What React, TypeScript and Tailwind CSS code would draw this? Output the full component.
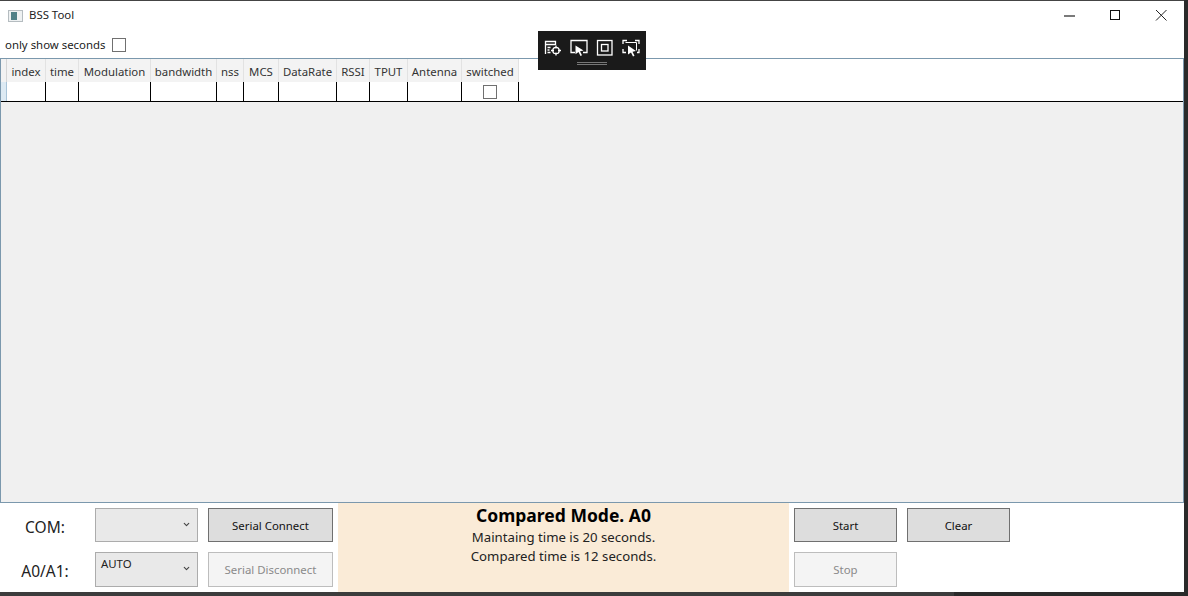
import { ChevronDown } from "lucide-react";

const font = { fontFamily: '"Noto Sans", "Open Sans", sans-serif' };

const columns = [
  { name: "index", width: "w-[39px]" },
  { name: "time", width: "w-[33px]" },
  { name: "Modulation", width: "w-[72px]" },
  { name: "bandwidth", width: "w-[66px]" },
  { name: "nss", width: "w-[27px]" },
  { name: "MCS", width: "w-[35px]" },
  { name: "DataRate", width: "w-[58px]" },
  { name: "RSSI", width: "w-[33px]" },
  { name: "TPUT", width: "w-[38px]" },
  { name: "Antenna", width: "w-[54px]" },
  { name: "switched", width: "w-[57px]" },
];

function Check() {
  return <span className="block w-[14px] h-[14px] border border-[#707070] bg-white" />;
}

function Combo({ text }: { text?: string }) {
  return (
    <div className="relative w-[103px] h-full border border-[#acacac] bg-[#e9e9e9] text-[11.4px] text-[#222] pl-[5px] pt-[3px] leading-[16px]">
      {text}
      <ChevronDown className="absolute right-[6px] top-[11px] w-[9px] h-[9px] text-[#444]" strokeWidth={3} />
    </div>
  );
}

function Btn({ label, off, w }: { label: string; off?: boolean; w: string }) {
  return (
    <button
      className={
        off
          ? `${w} h-full border border-[#bdbdbd] bg-[#f4f4f4] text-[#8a8a8a] text-[11.4px] pt-[1px]`
          : `${w} h-full border border-[#707070] bg-[#dddddd] text-[#111] text-[11.4px] pt-[1px]`
      }
    >
      {label}
    </button>
  );
}

function ToolbarIcons() {
  return (
    <div className="flex items-center gap-[8px] pl-[6px] pt-[8px]">
      <svg width="18" height="18" viewBox="0 0 18 18" fill="none" stroke="white" strokeWidth="1.3">
        <path d="M1.500 15V2.500h10V6" />
        <path d="M1.500 5.500h10M3.500 8.500h3M3.500 11h2M3.500 13.500h3" />
        <circle cx="12" cy="11.500" r="3.200" />
        <path d="M12 6.500v3M12 13.500v3M7 11.500h3M14 11.500h3" />
      </svg>
      <svg width="18" height="18" viewBox="0 0 18 18" fill="none" stroke="white" strokeWidth="1.3">
        <path d="M5 13.500H1V1.500h16v12h-4" />
        <path d="M5.500 6.500l8 5-3.500.8 2 4-1.500.7-2-4-3 2.200z" fill="white" stroke="none" />
      </svg>
      <svg width="18" height="18" viewBox="0 0 18 18" fill="none" stroke="white" strokeWidth="1.3">
        <rect x="1.500" y="1.500" width="14.500" height="14.500" />
        <rect x="5.500" y="5.500" width="6.500" height="6.500" />
      </svg>
      <svg width="18" height="18" viewBox="0 0 18 18" fill="none" stroke="white" strokeWidth="1.3">
        <path d="M1 5V1.500h4M13 1.500h4V5M1 10v3.500h3M17 10v3.500h-2" />
        <path d="M3.500 3.500h11v8" strokeWidth="1" />
        <path d="M6 6.500l8 5.500-3.500.7 2 4-1.500.7-2-4-3 2.200z" fill="white" stroke="none" />
      </svg>
    </div>
  );
}

export default function App() {
  return (
    <div style={font} className="relative w-[1188px] h-[596px] overflow-hidden bg-[#2a2a2a] text-[#222]">
      <div className="w-[1184px] h-[592px] bg-white border-t border-[#444] flex flex-col">
        {/* title bar */}
        <div className="h-[29px] flex items-center shrink-0">
          <div className="ml-[8px] w-[15px] h-[12px] border border-[#b5bcc0] bg-[#eef1f2] flex pl-[2px] py-[1px]">
            <span className="w-[6px] bg-[#4f8087]" />
          </div>
          <span className="ml-[6px] text-[11.4px] pb-[1px]">BSS Tool</span>
          <div className="ml-auto flex items-center text-black">
            <svg width="46" height="29" viewBox="0 0 46 29" fill="none" stroke="#222" strokeWidth="1.2">
              <path d="M18 15h11" />
            </svg>
            <svg width="46" height="29" viewBox="0 0 46 29" fill="none" stroke="#111" strokeWidth="1">
              <rect x="18.500" y="9.500" width="9" height="9" />
            </svg>
            <svg width="46" height="29" viewBox="0 0 46 29" fill="none" stroke="#222" strokeWidth="1">
              <path d="M18 9l10.500 10.500M28.500 9L18 19.500" />
            </svg>
          </div>
        </div>

        {/* option row */}
        <div className="h-[28px] flex items-center pl-[5px] pt-[2px] gap-[7px] text-[11.4px] shrink-0">
          <span>only show seconds</span>
          <Check />
        </div>

        {/* data grid */}
        <div className="h-[445px] border border-[#7b98ad] bg-[#f0f0f0] shrink-0 flex flex-col">
          <div className="h-[23px] flex bg-white shrink-0">
            <div className="w-[6px] bg-[#f2f2f2] border-r border-[#d5d5d5]" />
            {columns.map((c) => (
              <div key={c.name} className={`${c.width} border-r border-[#e2e2e2] bg-[#f3f3f3] flex items-center justify-center pt-[2px] text-[11.4px] text-[#333]`}>
                {c.name}
              </div>
            ))}
          </div>
          <div className="h-[20px] flex bg-white border-b border-black shrink-0">
            <div className="w-[6px] bg-[#ddeaf3] border-r border-[#a9c4d8]" />
            {columns.map((c) => (
              <div key={c.name} className={`${c.width} border-r border-black flex items-center justify-center`}>
                {c.name === "switched" ? <Check /> : null}
              </div>
            ))}
          </div>
        </div>

        {/* bottom controls */}
        <div className="flex-1 flex">
          <div className="grid grid-cols-[95px_113px_130px] grid-rows-[34px_35px] gap-y-[10px] pt-[5px]">
            <div className="flex items-center justify-center text-[15.5px] pt-[6px] pr-[5px]">COM:</div>
            <Combo />
            <Btn label="Serial Connect" w="w-[125px]" />
            <div className="flex items-center justify-center text-[15.5px] pt-[4px] pr-[5px]">A0/A1:</div>
            <Combo text="AUTO" />
            <Btn label="Serial Disconnect" off w="w-[125px]" />
          </div>
          <div className="w-[451px] bg-[#faebd7] flex flex-col items-center text-black">
            <div className="text-[17.5px] font-bold leading-[23px] mt-[1px]">Compared Mode. A0</div>
            <div className="text-[13.2px] leading-[19px] mt-[1px] text-[#222]">Maintaing time is 20 seconds.</div>
            <div className="text-[13.2px] leading-[19px] text-[#222]">Compared time is 12 seconds.</div>
          </div>
          <div className="grid grid-cols-[103px_103px] grid-rows-[34px_35px] gap-x-[10px] gap-y-[10px] pt-[5px] pl-[5px]">
            <Btn label="Start" w="w-[103px]" />
            <Btn label="Clear" w="w-[103px]" />
            <Btn label="Stop" off w="w-[103px]" />
          </div>
        </div>
      </div>

      {/* what shows behind the window along its bottom edge */}
      <div className="w-[954px] h-[4px] bg-[#3c3c3c]" />

      {/* floating capture toolbar */}
      <div className="absolute left-[538px] top-[31px] w-[108px] h-[39px] bg-[#1a1a1a]">
        <ToolbarIcons />
        <div className="absolute left-[39px] top-[31px] w-[30px] h-[3px] border-y border-[#777]" />
      </div>
    </div>
  );
}
